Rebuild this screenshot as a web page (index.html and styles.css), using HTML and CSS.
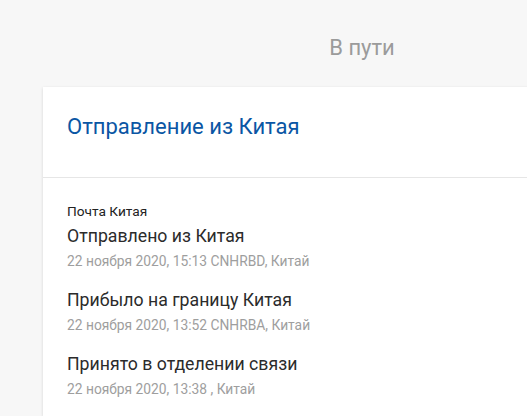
FILE: index.html
```html
<!DOCTYPE html>
<html lang="ru">
<head>
<meta charset="utf-8">
<link rel="stylesheet" href="styles.css">
</head>
<body>
<div class="page">
  <div class="status">В пути</div>
  <div class="card">
    <div class="card-head">
      <h2 class="card-title">Отправление из Китая</h2>
    </div>
    <div class="card-body">
      <div class="carrier">Почта Китая</div>
      <div class="events">
        <div class="event">
          <div class="event-title">Отправлено из Китая</div>
          <div class="event-meta">22 ноября 2020, 15:13 CNHRBD, Китай</div>
        </div>
        <div class="event">
          <div class="event-title">Прибыло на границу Китая</div>
          <div class="event-meta">22 ноября 2020, 13:52 CNHRBA, Китай</div>
        </div>
        <div class="event">
          <div class="event-title">Принято в отделении связи</div>
          <div class="event-meta">22 ноября 2020, 13:38 , Китай</div>
        </div>
      </div>
    </div>
  </div>
</div>
</body>
</html>
```

FILE: styles.css
```css
html, body {
  margin: 0;
  padding: 0;
  background: #f7f7f7;
  overflow: hidden;
}
body {
  font-family: Roboto, "Noto Sans", sans-serif;
  width: 527px;
  height: 416px;
}
.page {
  margin-left: 43px;
  width: 638px;
  padding-top: 36px;
}
.status {
  text-align: center;
  font-size: 22px;
  line-height: 24px;
  color: #9b9b9b;
  margin-bottom: 27px;
}
.card {
  background: #fff;
  box-shadow: 0 1px 3px rgba(0, 0, 0, 0.14);
  height: 329px;
}
.card-head {
  border-bottom: 1px solid #e6e6e6;
  padding: 28px 24px 0;
  box-sizing: border-box;
  height: 91px;
}
.card-title {
  margin: 0;
  font-weight: 400;
  font-size: 22px;
  line-height: 24px;
  color: #0a56a4;
}
.card-body {
  padding: 24px 24px 0;
}
.carrier {
  font-size: 13.7px;
  line-height: 18px;
  color: #222;
  margin-bottom: 4px;
}
.events {
  display: flex;
  flex-direction: column;
  gap: 17px;
}
.event-title {
  font-size: 17.7px;
  line-height: 24px;
  color: #2b2b2b;
}
.event-meta {
  margin-top: 3px;
  font-size: 13.8px;
  line-height: 20px;
  color: #9e9e9e;
}
```
